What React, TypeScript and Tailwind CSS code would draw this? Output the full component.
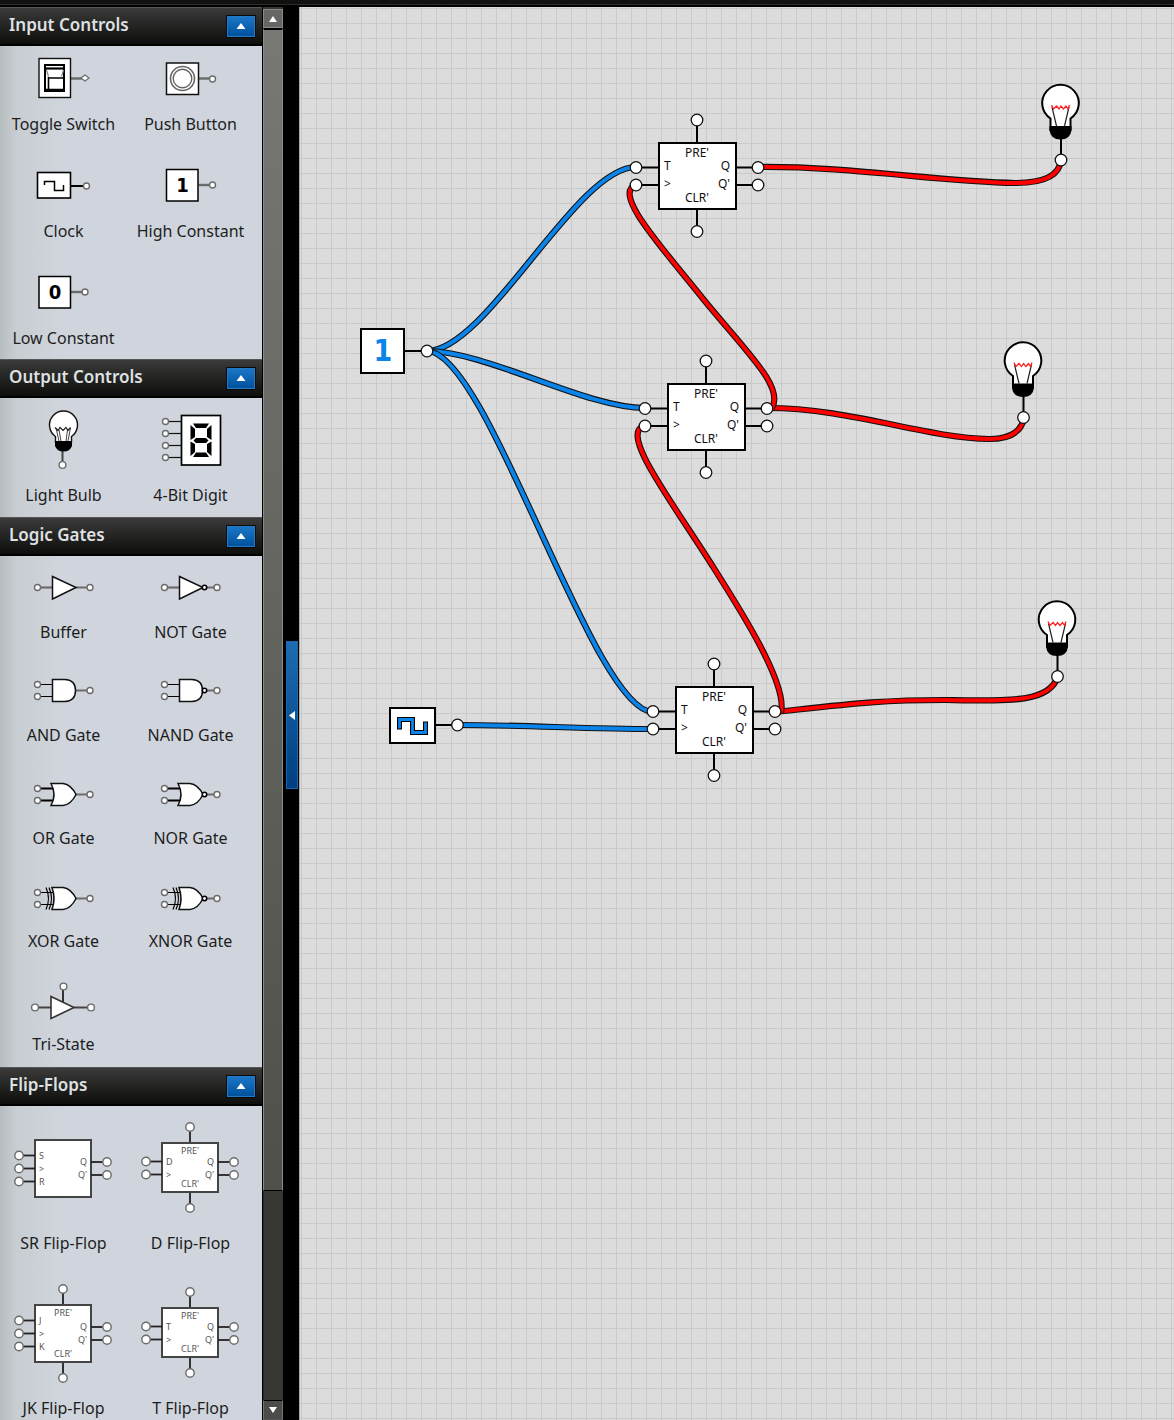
import React from 'react';

const BLUE = '#0b84ea';
const RED = '#ff0000';

// ---------- palette icons ----------

const Pin: React.FC<{ x: number; y: number; r?: number }> = ({ x, y, r = 3 }) => (
  <circle cx={x} cy={y} r={r} fill="#fff" stroke="#6b6b6b" strokeWidth="1.4" />
);

const Icon: React.FC<{ height: number; children: React.ReactNode }> = ({ height, children }) => (
  <svg width="127" height={height} viewBox={`0 0 127 ${height}`} fill="none" aria-hidden="true">
    {children}
  </svg>
);

const ToggleIcon = () => (
  <Icon height={64}>
    <path d="M71 32.5H82" stroke="#6b6b6b" strokeWidth="2.4" />
    <path d="M81 32l4-3 4 3-4 3z" fill="#fff" stroke="#6b6b6b" strokeWidth="1.2" />
    <rect x="39" y="12.5" width="31.5" height="39" fill="#fff" stroke="#111" strokeWidth="1.4" />
    <rect x="45" y="19" width="19" height="26" stroke="#000" strokeWidth="2" />
    <path d="M45 22.5H64" stroke="#000" strokeWidth="2.2" />
    <path d="M46.5 24l2 6.5M63.5 24l-2 6.5" stroke="#888" strokeWidth="1.2" />
    <path d="M48.5 31V44M48 32H63M46 43.5H64" stroke="#000" strokeWidth="1.6" />
  </Icon>
);

const PushIcon = () => (
  <Icon height={64}>
    <path d="M72 32.5H83" stroke="#6b6b6b" strokeWidth="2.4" />
    <Pin x={85.5} y={33} />
    <rect x="39.5" y="17" width="32" height="31.5" fill="#fff" stroke="#111" strokeWidth="1.5" />
    <circle cx="55.5" cy="32.5" r="12" stroke="#666" strokeWidth="1.6" />
    <circle cx="55.5" cy="32.5" r="9.3" stroke="#666" strokeWidth="1.4" />
  </Icon>
);

const ClockIcon = () => (
  <Icon height={64}>
    <path d="M71 33H84" stroke="#000" strokeWidth="2" />
    <Pin x={86.5} y={33} />
    <rect x="37.5" y="19.5" width="33" height="25.5" fill="#fff" stroke="#000" strokeWidth="1.6" />
    <path d="M44.5 32V28.5H54.5V37.5H63.5V32" stroke="#000" strokeWidth="1.5" />
  </Icon>
);

const ConstantIcon: React.FC<{ value: string; x: number }> = ({ value, x }) => (
  <Icon height={64}>
    <path d={`M${x + 32} 32H${x + 43}`} stroke="#6b6b6b" strokeWidth="2.4" />
    <Pin x={x + 46} y={32} />
    <rect x={x} y="16.5" width="31.5" height="31.5" fill="#fff" stroke="#000" strokeWidth="1.5" />
    <text
      x={x + 16}
      y="39"
      textAnchor="middle"
      fill="#000"
      className="font-['DejaVu_Sans_Condensed','DejaVu_Sans',sans-serif] text-[20px] font-bold"
    >
      {value}
    </text>
  </Icon>
);

const BulbIcon = () => (
  <Icon height={83}>
    <path d="M62.5 53V64" stroke="#444" strokeWidth="2" />
    <Pin x={62.5} y={67} r={3.4} />
    <path d="M55.5 44V38.5A14 14 0 1 1 71.5 38.5V44Z" fill="#fff" stroke="#111" strokeWidth="1.4" />
    <path d="M55 43H72V48Q70 53.5 63.5 53.5Q57 53.5 55 48Z" fill="#000" />
    <path d="M59 43L56 30M68 43L70.5 30M61 43L59 32M66 43L67.5 32" stroke="#444" strokeWidth="1" />
    <path d="M55 29.5l3 3 2-3 3 3 3-3 2 3 2.5-3" stroke="#222" strokeWidth="1.2" />
  </Icon>
);

const DigitIcon = () => (
  <Icon height={83}>
    {[23.5, 35.5, 47.5, 59.5].map((y) => (
      <g key={y}>
        <path d={`M41 ${y}H54`} stroke="#111" strokeWidth="1.2" />
        <Pin x={38.5} y={y} />
      </g>
    ))}
    <rect x="54.5" y="17.5" width="39" height="49.5" fill="#fff" stroke="#000" strokeWidth="1.7" />
    <path
      d="M66 25.5H82L79 30H69ZM66 59H82L79 54.5H69ZM66.5 42.5L69 40H79L81.5 42.5 79 45H69Z"
      fill="#000"
    />
    <path
      d="M63.5 27L68 31V39L63.5 42ZM84.5 27L80 31V39L84.5 42ZM63.5 43.5L68 46V54L63.5 58ZM84.5 43.5L80 46V54L84.5 58Z"
      fill="#000"
    />
  </Icon>
);

type GateShape = 'buffer' | 'and' | 'or' | 'xor';

const gateBody: Record<GateShape, string> = {
  buffer: 'M52.5 20.5L76 31.5 52.5 43Z',
  and: 'M52.5 20.5H65Q75.5 21 75.5 31.5T65 42.5H52.5Z',
  or: 'M51 21.5H63Q71 22.5 76 32.5 71 42.5 63 43.5H51Q57 32.5 51 21.5Z',
  xor: 'M52 22.5H63Q71 23.5 76 33.5 71 43.5 63 44.5H52Q56 33.5 52 22.5Z',
};

// centre line of each shape inside its cell
const gateAxis: Record<GateShape, number> = { buffer: 31.5, and: 31.5, or: 32.5, xor: 33.5 };

const GateIcon: React.FC<{ shape: GateShape; inverted?: boolean }> = ({ shape, inverted }) => {
  const y = gateAxis[shape];
  return (
    <Icon height={62}>
      <path d={`M76 ${y}H87`} stroke="#6b6b6b" strokeWidth="2" />
      {shape === 'buffer' ? (
        <path d={`M40 ${y}H52`} stroke="#6b6b6b" strokeWidth="2.2" />
      ) : (
        <path
          d={`M40 ${y - 6}H54M40 ${y + 6}H54`}
          stroke="#000"
          strokeWidth={shape === 'or' ? 1.8 : 1.1}
        />
      )}
      <path d={gateBody[shape]} fill="#fff" stroke="#111" strokeWidth="1.5" />
      {shape === 'xor' && (
        <path d="M46 22.5Q51 33.5 46 44.5M49 22.5Q54 33.5 49 44.5" stroke="#000" strokeWidth="1.2" />
      )}
      {inverted && <circle cx="77.5" cy={y} r="2.2" fill="#fff" stroke="#000" strokeWidth="1.6" />}
      {shape === 'buffer' ? (
        <Pin x={37.5} y={y} />
      ) : (
        <>
          <Pin x={37.5} y={y - 6} />
          <Pin x={37.5} y={y + 6} />
        </>
      )}
      <Pin x={90} y={y} />
    </Icon>
  );
};

const TriStateIcon = () => (
  <Icon height={62}>
    <path d="M38 39.5H52M74 39.5H88" stroke="#444" strokeWidth="2" />
    <path d="M51 28.5L74 39.5 51 50.5Z" fill="#fff" stroke="#333" strokeWidth="1.6" />
    <path d="M63 21V34" stroke="#333" strokeWidth="2" />
    <Pin x={35} y={39.5} r={3.4} />
    <Pin x={91} y={39.5} r={3.4} />
    <Pin x={63.5} y={18.5} r={3.4} />
  </Icon>
);

interface FlipFlopIconProps {
  inputs: string[];
  preset?: boolean;
}

const FlipFlopIcon: React.FC<FlipFlopIconProps> = ({ inputs, preset = true }) => {
  const tall = inputs.length === 3;
  const top = tall ? 34 : 37;
  const bottom = tall ? 91 : 86;
  const inputY = (i: number) => (tall ? 49.5 : 55.5) + i * 13;
  return (
    <Icon height={123}>
      {preset && (
        <>
          <path d={`M63 ${top - 12}V${top}M63 ${bottom}V${bottom + 12}`} stroke="#222" strokeWidth="1.8" />
          <Pin x={63} y={top - 16} r={4.2} />
          <Pin x={63} y={bottom + 16} r={4.2} />
        </>
      )}
      <rect x="35" y={top} width="56" height={bottom - top} fill="#fff" stroke="#444" strokeWidth="2" />
      <g className="font-['Noto_Sans',sans-serif] text-[9px]" fill="#555">
        {inputs.map((name, i) => (
          <g key={name}>
            <path d={`M23 ${inputY(i)}H35`} stroke="#222" strokeWidth="1.8" />
            <Pin x={19} y={inputY(i)} r={4.2} />
            <text x="39" y={inputY(i) + 3}>{name}</text>
          </g>
        ))}
        {['Q', "Q'"].map((name, i) => (
          <g key={name}>
            <path d={`M91 ${56 + i * 13}H103`} stroke="#222" strokeWidth="1.8" />
            <Pin x={107} y={56 + i * 13} r={4.2} />
            <text x="87" y={59 + i * 13} textAnchor="end">{name}</text>
          </g>
        ))}
        {preset && (
          <>
            <text x="63" y={top + 11} textAnchor="middle">PRE'</text>
            <text x="63" y={bottom - 5} textAnchor="middle">CLR'</text>
          </>
        )}
      </g>
    </Icon>
  );
};

// ---------- palette ----------

interface PaletteItem {
  label: string;
  icon: React.ReactNode;
}

interface PaletteSection {
  title: string;
  spacing: string;
  items: PaletteItem[];
}

const sections: PaletteSection[] = [
  {
    title: 'Input Controls',
    spacing: 'gap-y-[15px] pb-[7px]',
    items: [
      { label: 'Toggle Switch', icon: <ToggleIcon /> },
      { label: 'Push Button', icon: <PushIcon /> },
      { label: 'Clock', icon: <ClockIcon /> },
      { label: 'High Constant', icon: <ConstantIcon value="1" x={39.5} /> },
      { label: 'Low Constant', icon: <ConstantIcon value="0" x={39} /> },
    ],
  },
  {
    title: 'Output Controls',
    spacing: 'pb-2',
    items: [
      { label: 'Light Bulb', icon: <BulbIcon /> },
      { label: '4-Bit Digit', icon: <DigitIcon /> },
    ],
  },
  {
    title: 'Logic Gates',
    spacing: 'gap-y-[13px] pb-[9px]',
    items: [
      { label: 'Buffer', icon: <GateIcon shape="buffer" /> },
      { label: 'NOT Gate', icon: <GateIcon shape="buffer" inverted /> },
      { label: 'AND Gate', icon: <GateIcon shape="and" /> },
      { label: 'NAND Gate', icon: <GateIcon shape="and" inverted /> },
      { label: 'OR Gate', icon: <GateIcon shape="or" /> },
      { label: 'NOR Gate', icon: <GateIcon shape="or" inverted /> },
      { label: 'XOR Gate', icon: <GateIcon shape="xor" /> },
      { label: 'XNOR Gate', icon: <GateIcon shape="xor" inverted /> },
      { label: 'Tri-State', icon: <TriStateIcon /> },
    ],
  },
  {
    title: 'Flip-Flops',
    spacing: 'gap-y-[14px] pb-2',
    items: [
      { label: 'SR Flip-Flop', icon: <FlipFlopIcon inputs={['S', '>', 'R']} preset={false} /> },
      { label: 'D Flip-Flop', icon: <FlipFlopIcon inputs={['D', '>']} /> },
      { label: 'JK Flip-Flop', icon: <FlipFlopIcon inputs={['J', '>', 'K']} /> },
      { label: 'T Flip-Flop', icon: <FlipFlopIcon inputs={['T', '>']} /> },
    ],
  },
];

const Section: React.FC<{ section: PaletteSection }> = ({ section }) => (
  <section>
    <header className="flex h-[39px] items-center justify-between border-t border-b-2 border-t-[#555] border-b-black bg-linear-to-b from-[#3b3b3b] to-[#0e0e0c] pr-[6px] pl-[9px]">
      <h2 className="pb-[2px] text-[17px] leading-6 font-semibold text-[#dfe0e2]">{section.title}</h2>
      <button
        type="button"
        aria-label={`Collapse ${section.title}`}
        className="flex h-[23px] w-[30px] items-center justify-center border border-[#0a0a0a] bg-linear-to-b from-[#1b78c8] to-[#00509c] shadow-[inset_0_0_0_1px_#2478c2]"
      >
        <svg width="10" height="6" viewBox="0 0 10 6" aria-hidden="true">
          <path d="M5 0L9.5 6H0.5Z" fill="#fff" />
        </svg>
      </button>
    </header>
    <div
      className={`grid grid-cols-[127px_127px] bg-linear-to-r from-[#b7bdbf] via-[#c8cdd2] via-[16px] to-[#d0d5dd] to-[60px] ${section.spacing}`}
    >
      {section.items.map((item) => (
        <button key={item.label} type="button" className="flex flex-col items-center">
          {item.icon}
          <span className="text-base leading-7 whitespace-nowrap text-[#1d1d1d]">{item.label}</span>
        </button>
      ))}
    </div>
  </section>
);

const ScrollBar = () => (
  <div className="flex w-[21px] shrink-0 flex-col border-l border-black bg-[#373733] pt-[2px]">
    <button
      type="button"
      aria-label="Scroll up"
      className="flex h-[19px] items-center justify-center border border-[#8a8b88] bg-[#666764]"
    >
      <svg width="8" height="6" viewBox="0 0 8 6" aria-hidden="true">
        <path d="M4 0L8 6H0Z" fill="#fff" />
      </svg>
    </button>
    <div className="grow-[1162] border border-t-2 border-[#8a8b86] border-t-black border-b-black bg-linear-to-b from-[#777975] to-[#4f5049]" />
    <div className="grow-[209] border-l border-[#2a2a27]" />
    <button
      type="button"
      aria-label="Scroll down"
      className="flex h-5 items-center justify-center border border-x-[#77776f] border-t-black border-b-[#555] bg-[#4c4d49]"
    >
      <svg width="8" height="6" viewBox="0 0 8 6" aria-hidden="true">
        <path d="M0 0H8L4 6Z" fill="#fff" />
      </svg>
    </button>
  </div>
);

// ---------- circuit ----------

const Port: React.FC<{ x: number; y: number }> = ({ x, y }) => (
  <circle cx={x} cy={y} r="5.8" fill="#fff" stroke="#111" strokeWidth="1.3" />
);

const Wire: React.FC<{ d: string; color: string }> = ({ d, color }) => (
  <g fill="none">
    <path d={d} stroke="#111" strokeWidth="6.2" />
    <path d={d} stroke={color} strokeWidth="4" />
  </g>
);

const TFlipFlop: React.FC<{ x: number; y: number }> = ({ x, y }) => (
  <g transform={`translate(${x} ${y})`}>
    <path d="M-23 24.5H0M-23 42H0M77 24.5H99M77 42H99M38 -23V0M38 66V88" stroke="#000" strokeWidth="2" />
    <rect width="77" height="66" fill="#fff" stroke="#000" strokeWidth="2" />
    <g className="font-['Noto_Sans',sans-serif] text-[12px]" fill="#111">
      <text x="38" y="14" textAnchor="middle">PRE'</text>
      <text x="5" y="27">T</text>
      <text x="5" y="45">&gt;</text>
      <text x="71" y="27" textAnchor="end">Q</text>
      <text x="71" y="45" textAnchor="end">Q'</text>
      <text x="38" y="59" textAnchor="middle">CLR'</text>
    </g>
    <Port x={-23} y={24.5} />
    <Port x={-23} y={42} />
    <Port x={99} y={24.5} />
    <Port x={99} y={42} />
    <Port x={38} y={-23} />
    <Port x={38} y={88.5} />
  </g>
);

// origin is the bulb's input port
const LightBulb: React.FC<{ x: number; y: number }> = ({ x, y }) => (
  <g transform={`translate(${x} ${y})`} fill="none">
    <path d="M0 0V-22" stroke="#000" strokeWidth="2" />
    <path
      d="M-10.5 -30V-41.5A18.3 18.3 0 1 1 9.5 -41.5V-30Z"
      fill="#fff"
      stroke="#000"
      strokeWidth="2"
    />
    <path d="M-11.5 -34H10.5V-30Q9.5 -20.5 -0.5 -20.5T-11.5 -30Z" fill="#000" />
    <path d="M-9 -53L-4.5 -34M8 -53L3.5 -34" stroke="#222" strokeWidth="1.2" />
    <path d="M-9.5 -55l2 4 3-3 2.5 3 2-3 2.5 3 2.5-3 2 3 1.5-4" stroke="#f22" strokeWidth="1.3" />
    <Port x={0} y={0} />
  </g>
);

const wires = [
  { color: BLUE, d: 'M127 344C187 344 276 160 336 160' },
  { color: BLUE, d: 'M127 344C187 344 285 401 345 401' },
  { color: BLUE, d: 'M127 344C188 344 293 705 353 705' },
  { color: BLUE, d: 'M158 718C220 718 290 722 353 722' },
  { color: RED, d: 'M458 160C550 159 640 175 715 176C750 176 760 165 761 153' },
  { color: RED, d: 'M467 401C550 401 625 431 689 432C714 432 722 422 724 411' },
  { color: RED, d: 'M475 705C550 697 580 693 645 693C710 694 750 696 758 669' },
  { color: RED, d: 'M472 401C484 380 450 349 404 293C360 238 312 186 336 178' },
  { color: RED, d: 'M481 705C488 676 436 596 410 555C370 492 318 424 345 419' },
];

const Circuit = () => (
  <svg className="block h-full w-full" role="img" aria-label="Circuit">
    {wires.map((wire) => (
      <Wire key={wire.d} {...wire} />
    ))}

    <path d="M105 344H127" stroke="#000" strokeWidth="2" />
    <rect x="61" y="322" width="43" height="44" fill="#fff" stroke="#000" strokeWidth="2" />
    <text
      x="83"
      y="354"
      textAnchor="middle"
      fill={BLUE}
      className="font-['DejaVu_Sans_Condensed','DejaVu_Sans',sans-serif] text-[30px] font-bold"
    >
      1
    </text>
    <Port x={127} y={344} />

    <path d="M136 718H158" stroke="#000" strokeWidth="2" />
    <rect x="90" y="701" width="45" height="35" fill="#fff" stroke="#000" strokeWidth="2" />
    <g fill="none" strokeLinecap="square">
      <path d="M99.5 720V712.5H112.5V725.5H125.5V717" stroke="#000" strokeWidth="5" />
      <path d="M99.5 720V712.5H112.5V725.5H125.5V717" stroke={BLUE} strokeWidth="2.8" />
    </g>
    <Port x={157.5} y={718} />

    <TFlipFlop x={359} y={136} />
    <TFlipFlop x={368} y={377} />
    <TFlipFlop x={376} y={680} />

    <LightBulb x={761} y={153} />
    <LightBulb x={723.5} y={410.5} />
    <LightBulb x={757.5} y={669.5} />
  </svg>
);

export default function App() {
  return (
    <div className="flex h-screen flex-col overflow-hidden bg-black font-['Noto_Sans',sans-serif]">
      <div className="h-[7px] shrink-0 border-b-2 border-black bg-[#10100f]">
        <div className="h-full border-b border-[#2c2c2a]" />
      </div>
      <div className="flex min-h-0 flex-1">
        <aside className="w-[262px] shrink-0 overflow-hidden">
          {sections.map((section) => (
            <Section key={section.title} section={section} />
          ))}
        </aside>
        <ScrollBar />
        <div className="flex w-4 shrink-0 items-center justify-end bg-black pt-[3px] pr-px">
          <button
            type="button"
            aria-label="Hide palette"
            className="flex h-[148px] w-3 items-center justify-center border border-[#1a68ad] bg-linear-to-b from-[#1f6cb0] to-[#003f80]"
          >
            <svg width="6" height="9" viewBox="0 0 6 9" aria-hidden="true">
              <path d="M6 0V9L0 4.5Z" fill="#fff" />
            </svg>
          </button>
        </div>
        <main className="min-w-0 flex-1 border-l border-[#aaa] bg-[#dcdcdc] bg-[linear-gradient(to_right,#c9c9c9_1px,transparent_1px),linear-gradient(to_bottom,#c9c9c9_1px,transparent_1px)] bg-[size:15px_15px] bg-[position:1px_1px]">
          <Circuit />
        </main>
      </div>
    </div>
  );
}
